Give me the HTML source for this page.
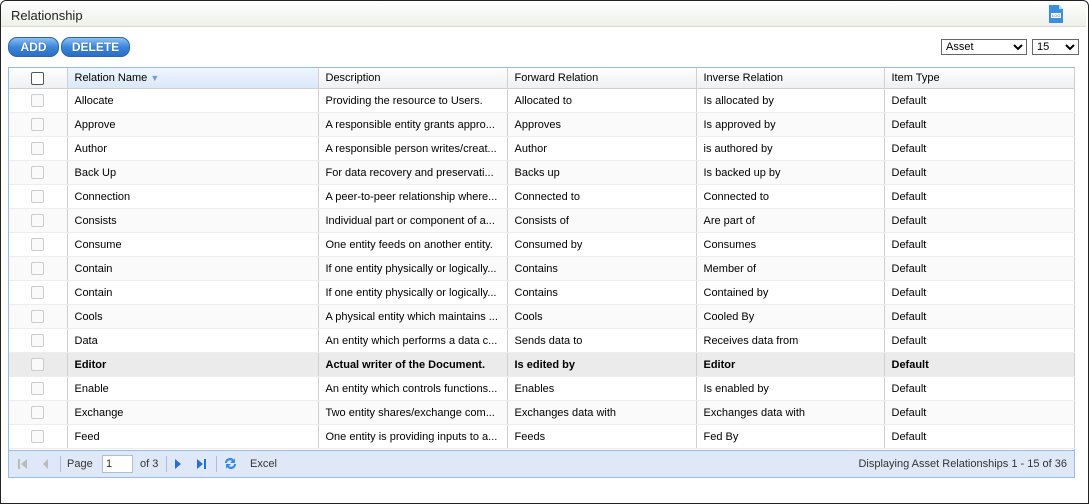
<!DOCTYPE html>
<html><head><meta charset="utf-8"><style>
body{margin:0;width:1089px;height:504px;background:#fff;font-family:"Liberation Sans",Arial,sans-serif;font-size:11px;color:#000;overflow:hidden;position:relative}
.frame{position:absolute;left:0;top:0;width:1087px;height:502px;border:1px solid #222;border-radius:6px 6px 0 0;background:#fff}
.hdr{position:absolute;left:1px;top:1px;width:1085px;height:25px;background:linear-gradient(#fff,#eef1ea);border-bottom:1px solid #d8dcd2;border-radius:6px 6px 0 0}
.hdr span{position:absolute;left:10px;top:7px;font-size:13px;color:#222}
.btn{position:absolute;top:37px;height:18px;border-radius:9px;background:linear-gradient(#8ec0f0,#3c86d8 50%,#2a6fc4);border:1px solid #2a66b0;color:#fff;font-weight:bold;font-size:12px;text-align:center;line-height:18px;text-shadow:0 0 1px #1a4a8a}
select{position:absolute;top:39px;height:16px;font-size:11px;border:1px solid #666;background:#fff;padding:0}
.grid{position:absolute;left:8px;top:67px;width:1065px;height:409px;border:1px solid #99bbe8}
table{border-collapse:collapse;table-layout:fixed;width:1065px}
td,th{height:23px;border-bottom:1px solid #ededed;border-right:1px solid #d0d0d0;padding:0 0 0 7px;text-align:left;font-weight:normal;white-space:nowrap;overflow:hidden}
th{height:20px;background:linear-gradient(#fff,#eef0f2);border-bottom:1px solid #d0d0d0;font-size:11px}
th.s{background:linear-gradient(#eef6ff,#dbe8f7)}
tr.alt td{background:#fafafa}
tr.sel td{background:#ebebeb;font-weight:bold}
.cb{display:block;margin:0 auto;width:11px;height:11px;border:1px solid #ccc;border-radius:2px;background:#fafafa}
th .cb{width:11px;height:11px;border:1px solid #555;background:#fff}
.ft{position:absolute;left:0;top:382px;width:1065px;height:26px;background:#dfe8f6;border-top:1px solid #99bbe8;color:#333}
.ft span{position:absolute;top:7px}
.sep{position:absolute;top:5px;width:1px;height:16px;background:#a9bfd6}
</style></head><body>
<div class="frame"></div>
<div class="hdr"><span>Relationship</span>
<svg style="position:absolute;left:1046px;top:3px" width="18" height="20" viewBox="0 0 18 20"><path d="M2 1h10l4 4v14H2z" fill="#3b8fe0"/><path d="M12 1v4h4" fill="#bcdcff"/><rect x="4" y="9" width="10" height="5" fill="#fff"/><text x="5" y="13" font-size="4" fill="#36c" font-family="Liberation Sans">LOG</text></svg></div>
<div class="btn" style="left:8px;width:49px">ADD</div>
<div class="btn" style="left:61px;width:67px">DELETE</div>
<select style="left:941px;width:86px"><option>Asset</option></select>
<select style="left:1032px;width:47px"><option>15</option></select>
<div class="grid">
<table>
<colgroup><col style="width:58px"><col style="width:251px"><col style="width:189px"><col style="width:189px"><col style="width:188px"><col style="width:190px"></colgroup>
<tr><th style="padding:0"><span class="cb"></span></th><th class="s">Relation Name <span style="color:#7a9cc8;font-size:9px">▼</span></th><th>Description</th><th>Forward Relation</th><th>Inverse Relation</th><th>Item Type</th></tr>
<tr><td style="padding:0"><span class="cb"></span></td><td>Allocate</td><td>Providing the resource to Users.</td><td>Allocated to</td><td>Is allocated by</td><td>Default</td></tr>
<tr class="alt"><td style="padding:0"><span class="cb"></span></td><td>Approve</td><td>A responsible entity grants appro...</td><td>Approves</td><td>Is approved by</td><td>Default</td></tr>
<tr><td style="padding:0"><span class="cb"></span></td><td>Author</td><td>A responsible person writes/creat...</td><td>Author</td><td>is authored by</td><td>Default</td></tr>
<tr class="alt"><td style="padding:0"><span class="cb"></span></td><td>Back Up</td><td>For data recovery and preservati...</td><td>Backs up</td><td>Is backed up by</td><td>Default</td></tr>
<tr><td style="padding:0"><span class="cb"></span></td><td>Connection</td><td>A peer-to-peer relationship where...</td><td>Connected to</td><td>Connected to</td><td>Default</td></tr>
<tr class="alt"><td style="padding:0"><span class="cb"></span></td><td>Consists</td><td>Individual part or component of a...</td><td>Consists of</td><td>Are part of</td><td>Default</td></tr>
<tr><td style="padding:0"><span class="cb"></span></td><td>Consume</td><td>One entity feeds on another entity.</td><td>Consumed by</td><td>Consumes</td><td>Default</td></tr>
<tr class="alt"><td style="padding:0"><span class="cb"></span></td><td>Contain</td><td>If one entity physically or logically...</td><td>Contains</td><td>Member of</td><td>Default</td></tr>
<tr><td style="padding:0"><span class="cb"></span></td><td>Contain</td><td>If one entity physically or logically...</td><td>Contains</td><td>Contained by</td><td>Default</td></tr>
<tr class="alt"><td style="padding:0"><span class="cb"></span></td><td>Cools</td><td>A physical entity which maintains ...</td><td>Cools</td><td>Cooled By</td><td>Default</td></tr>
<tr><td style="padding:0"><span class="cb"></span></td><td>Data</td><td>An entity which performs a data c...</td><td>Sends data to</td><td>Receives data from</td><td>Default</td></tr>
<tr class="sel"><td style="padding:0"><span class="cb"></span></td><td>Editor</td><td>Actual writer of the Document.</td><td>Is edited by</td><td>Editor</td><td>Default</td></tr>
<tr><td style="padding:0"><span class="cb"></span></td><td>Enable</td><td>An entity which controls functions...</td><td>Enables</td><td>Is enabled by</td><td>Default</td></tr>
<tr class="alt"><td style="padding:0"><span class="cb"></span></td><td>Exchange</td><td>Two entity shares/exchange com...</td><td>Exchanges data with</td><td>Exchanges data with</td><td>Default</td></tr>
<tr><td style="padding:0"><span class="cb"></span></td><td>Feed</td><td>One entity is providing inputs to a...</td><td>Feeds</td><td>Fed By</td><td>Default</td></tr>
</table>
<div class="ft">
<svg style="position:absolute;left:8px;top:7px" width="12" height="12"><rect x="1" y="1" width="2" height="10" fill="#bbb"/><path d="M10 1L4 6l6 5z" fill="#bbb"/></svg>
<svg style="position:absolute;left:32px;top:7px" width="10" height="12"><path d="M7 1L2 6l5 5z" fill="#bbb"/></svg>
<div class="sep" style="left:51px"></div>
<span style="left:58px">Page</span>
<div style="position:absolute;left:93px;top:4px;width:26px;height:16px;border:1px solid #a9bfd6;background:#fff;font-size:11px;line-height:16px;padding-left:3px;box-sizing:content-box">1</div>
<span style="left:131px">of 3</span>
<div class="sep" style="left:157px"></div>
<svg style="position:absolute;left:164px;top:7px" width="10" height="12"><path d="M2 1l6 5-6 5z" fill="#2a6fd0"/></svg>
<svg style="position:absolute;left:187px;top:7px" width="12" height="12"><path d="M1 1l6 5-6 5z" fill="#2a6fd0"/><rect x="8" y="1" width="2" height="10" fill="#2a6fd0"/></svg>
<div class="sep" style="left:207px"></div>
<svg style="position:absolute;left:214px;top:5px" width="15" height="15" viewBox="0 0 15 15"><path d="M2 7a5 5 0 0 1 9-3l1-2v5H7l2-2a3 3 0 0 0-5 2z" fill="#3a8be0"/><path d="M13 8a5 5 0 0 1-9 3l-1 2V8h5l-2 2a3 3 0 0 0 5-2z" fill="#3a8be0"/></svg>
<span style="left:241px">Excel</span>
<span style="right:7px">Displaying Asset Relationships 1 - 15 of 36</span>
</div>
</div>
</body></html>
